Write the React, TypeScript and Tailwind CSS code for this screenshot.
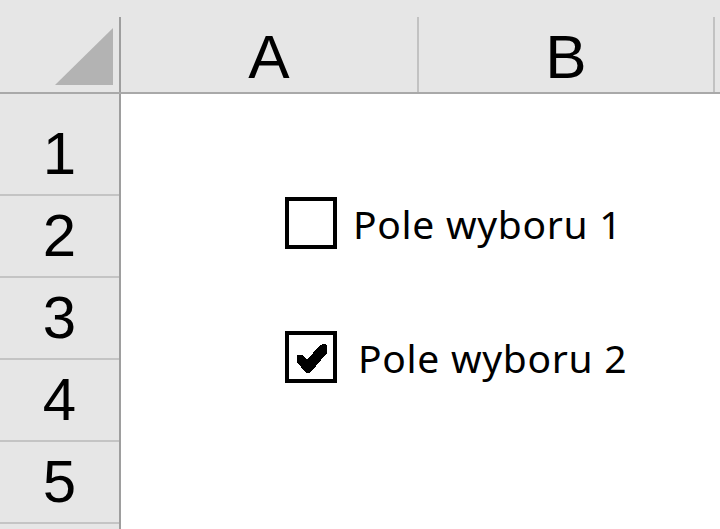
import React from "react";

const rowLabels = ["1", "2", "3", "4", "5"];

function Box({ checked }: { checked?: boolean }) {
  return (
    <div className="w-[52px] h-[52px] border-4 border-black bg-white shrink-0">
      {checked && (
        <svg width="44" height="44" viewBox="0 0 44 44" shapeRendering="crispEdges">
          <polygon
            points="8,20 14,20 18,25 31,10 35,9 38,10 38,18 21,38 17,38 8,27"
            fill="#000"
          />
        </svg>
      )}
    </div>
  );
}

export default function App() {
  return (
    <div
      className="w-[720px] h-[529px] overflow-hidden bg-white flex flex-col text-black"
      style={{ fontFamily: '"Liberation Sans", Arial, sans-serif' }}
    >
      {/* column headers */}
      <div className="h-[94px] flex bg-[#e6e6e6] border-b-2 border-[#a9a9a9] shrink-0">
        <div className="w-[121px] pt-[17px] shrink-0">
          <div className="h-full border-r-2 border-[#9e9e9e] flex items-end justify-end pr-[6px] pb-[7px]">
            <svg width="58" height="57" viewBox="0 0 58 57">
              <polygon points="0,57 58,0 58,57" fill="#b3b3b3" />
            </svg>
          </div>
        </div>
        <div className="w-[298px] pt-[17px] shrink-0">
          <div className="h-full border-r-2 border-[#c2c2c2] flex items-center justify-center text-[62px] leading-[75px] pt-[3px]">
            A
          </div>
        </div>
        <div className="w-[296px] pt-[17px] shrink-0">
          <div className="h-full border-r-2 border-[#c2c2c2] flex items-center justify-center text-[62px] leading-[75px] pt-[3px]">
            B
          </div>
        </div>
        <div className="flex-1" />
      </div>

      {/* body */}
      <div className="flex-1 flex min-h-0">
        <div className="w-[121px] shrink-0 bg-[#e6e6e6] border-r-2 border-[#9e9e9e] flex flex-col">
          {rowLabels.map((r, i) => (
            <div
              key={r}
              className={`${i === 0 ? "h-[102px]" : "h-[82px]"} shrink-0 border-b-2 border-[#c4c4c4] flex flex-col justify-end`}
            >
              <div className="h-[80px] flex items-center justify-center text-[60px] leading-[80px]">
                {r}
              </div>
            </div>
          ))}
          <div className="flex-1" />
        </div>

        <div
          className="flex-1 flex flex-col pl-[164px] pt-[103px] gap-[82px]"
          style={{ fontFamily: '"Noto Sans", "Open Sans", sans-serif' }}
        >
          <div className="flex items-center h-[52px]">
            <Box />
            <span className="ml-[16px] text-[39px] tracking-[0.7px] leading-[52px] translate-y-[1px] whitespace-nowrap">
              Pole wyboru 1
            </span>
          </div>
          <div className="flex items-center h-[52px]">
            <Box checked />
            <span className="ml-[21px] text-[39px] tracking-[0.7px] leading-[52px] translate-y-[1px] whitespace-nowrap">
              Pole wyboru 2
            </span>
          </div>
        </div>
      </div>
    </div>
  );
}
